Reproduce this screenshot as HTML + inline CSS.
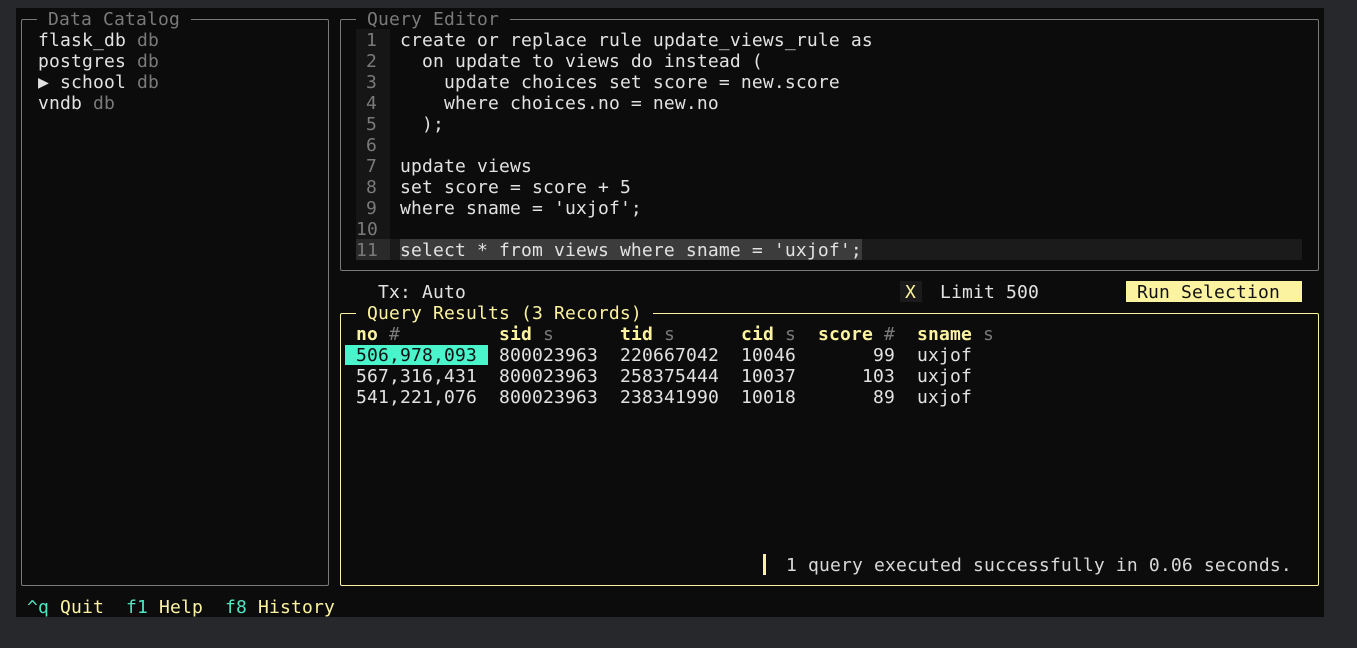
<!DOCTYPE html>
<html><head><meta charset="utf-8"><style>
*{margin:0;padding:0;box-sizing:border-box}
body{width:1357px;height:648px;background:#27282c;overflow:hidden;position:relative;font-family:"DejaVu Sans Mono","Liberation Mono",monospace;font-size:18px;letter-spacing:0.16px;color:#e2e2e2}
#term{position:absolute;left:16px;top:8px;width:1308px;height:609px;background:#0c0c0c}
.t{position:absolute;white-space:pre;line-height:21px;height:21px;padding-top:1px}
.box{position:absolute;border:1px solid #7a7a7a;border-radius:2px}
.g{color:#7a7a7a}
.y{color:#fcf3a0}
.c{color:#4fe6c2}
</style></head><body>
<div id="term"></div>
<div class="box" style="left:21px;top:19px;width:308px;height:567px"></div>
<div class="box" style="left:340px;top:19px;width:979px;height:252px"></div>
<div class="box" style="left:340px;top:313px;width:979px;height:273px;border-color:#fcf3a0"></div>

<div class="t g" style="left:37px;top:8px;background:#0c0c0c"> Data Catalog </div>
<div class="t g" style="left:356px;top:8px;background:#0c0c0c"> Query Editor </div>
<div class="t y" style="left:356px;top:302px;background:#0c0c0c"> Query Results (3 Records) </div>

<div class="t" style="left:38px;top:29px">flask_db <span class="g">db</span></div>
<div class="t" style="left:38px;top:50px">postgres <span class="g">db</span></div>
<div class="t" style="left:38px;top:71px">▶ school <span class="g">db</span></div>
<div class="t" style="left:38px;top:92px">vndb <span class="g">db</span></div>

<div style="position:absolute;left:356px;top:29px;width:34px;height:231px;background:#161616"></div>
<div style="position:absolute;left:356px;top:239px;width:946px;height:21px;background:#1b1b1b"></div>
<div style="position:absolute;left:356px;top:239px;width:34px;height:21px;background:#2a2a2a"></div>
<div style="position:absolute;left:400px;top:239px;width:462px;height:21px;background:#3c3c3c"></div>
<div class="t g" style="left:356px;top:29px;width:34px;text-align:right;padding-right:13px;height:231px">1
2
3
4
5
6
7
8
9
10
11</div>
<div class="t" style="left:400px;top:29px;height:231px">create or replace rule update_views_rule as
  on update to views do instead (
    update choices set score = new.score
    where choices.no = new.no
  );

update views
set score = score + 5
where sname = 'uxjof';

select * from views where sname = 'uxjof';</div>

<div class="t" style="left:378px;top:281px">Tx: Auto</div>
<div style="position:absolute;left:900px;top:281px;width:22px;height:21px;background:#1b1b1b"></div>
<div class="t y" style="left:905px;top:281px">X</div>
<div class="t" style="left:940px;top:281px">Limit 500</div>
<div style="position:absolute;left:1126px;top:281px;width:176px;height:21px;background:#fcf3a0"></div>
<div class="t" style="left:1137px;top:281px;color:#111">Run Selection</div>

<div class="t" style="left:356px;top:323px;font-weight:bold"><span class="y">no</span> <span class="g" style="font-weight:normal">#</span></div>
<div class="t" style="left:499px;top:323px;font-weight:bold"><span class="y">sid</span> <span class="g" style="font-weight:normal">s</span></div>
<div class="t" style="left:620px;top:323px;font-weight:bold"><span class="y">tid</span> <span class="g" style="font-weight:normal">s</span></div>
<div class="t" style="left:741px;top:323px;font-weight:bold"><span class="y">cid</span> <span class="g" style="font-weight:normal">s</span></div>
<div class="t" style="left:818px;top:323px;font-weight:bold"><span class="y">score</span> <span class="g" style="font-weight:normal">#</span></div>
<div class="t" style="left:917px;top:323px;font-weight:bold"><span class="y">sname</span> <span class="g" style="font-weight:normal">s</span></div>
<div style="position:absolute;left:345px;top:345px;width:143px;height:20px;background:#4af5cc"></div>
<div class="t" style="left:356px;top:344px;color:#111">506,978,093</div>
<div class="t" style="left:356px;top:365px">567,316,431</div>
<div class="t" style="left:356px;top:386px">541,221,076</div>
<div class="t" style="left:499px;top:344px;height:63px">800023963
800023963
800023963</div>
<div class="t" style="left:620px;top:344px;height:63px">220667042
258375444
238341990</div>
<div class="t" style="left:741px;top:344px;height:63px">10046
10037
10018</div>
<div class="t" style="left:840px;top:344px;height:63px;width:55px;text-align:right">99
103
89</div>
<div class="t" style="left:917px;top:344px;height:63px">uxjof
uxjof
uxjof</div>

<div style="position:absolute;left:763px;top:554px;width:3px;height:21px;background:#fcf3a0"></div>
<div class="t" style="left:786px;top:554px;color:#d8d8d8">1 query executed successfully in 0.06 seconds.</div>

<div class="t" style="left:27px;top:596px"><span class="c">^q</span> <span class="y">Quit</span>  <span class="c">f1</span> <span class="y">Help</span>  <span class="c">f8</span> <span class="y">History</span></div>
</body></html>
